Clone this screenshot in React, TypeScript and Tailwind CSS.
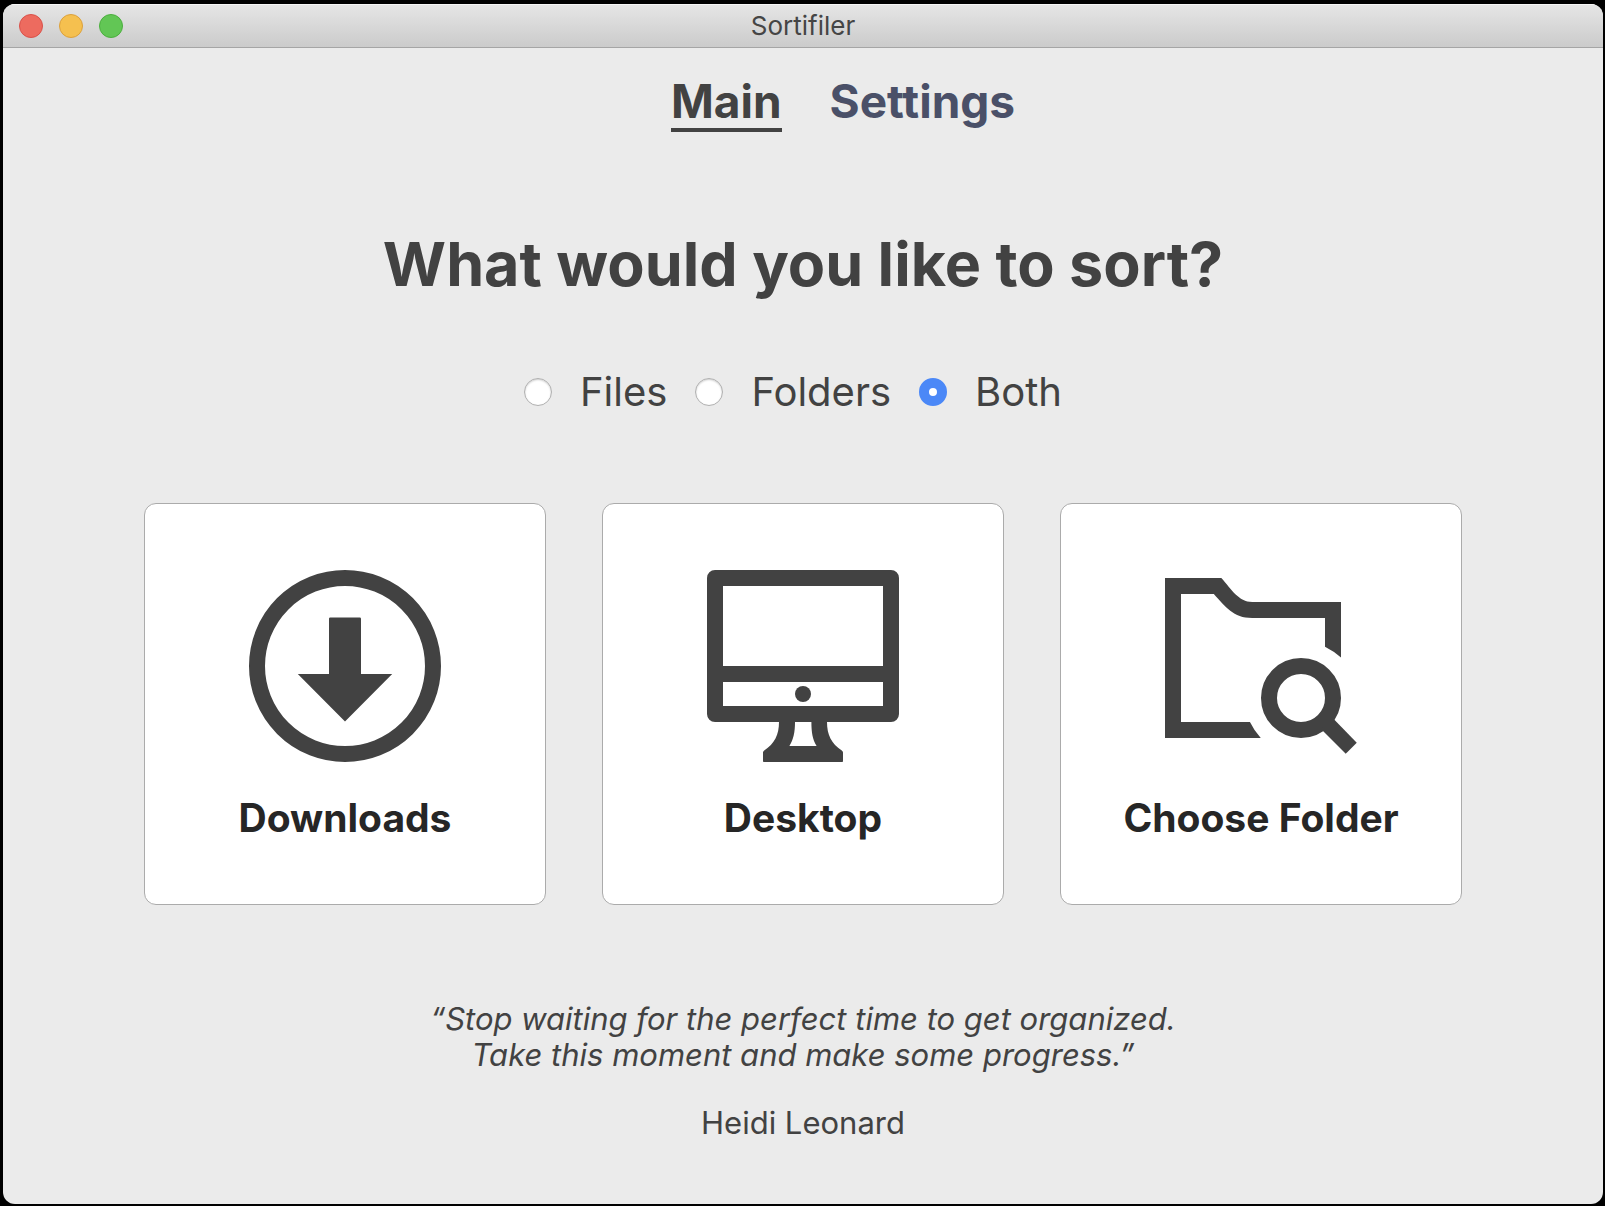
import { useState, type ReactNode } from "react";

const sortModes = ["Files", "Folders", "Both"];

function DownloadIcon() {
  return (
    <svg viewBox="0 0 24 24" className="size-48" fill="currentColor" aria-hidden="true">
      <circle cx="12" cy="12" r="11" fill="none" stroke="currentColor" strokeWidth="2" />
      <path d="M10.15 5.95h3.7q.15 0 .15.15V13h3.9L12 18.93 6.1 13H10V6.1q0-.15.15-.15Z" />
    </svg>
  );
}

function DesktopIcon() {
  return (
    <svg viewBox="0 0 24 24" className="size-48" fill="currentColor" aria-hidden="true">
      <path
        fillRule="evenodd"
        d="M1 0h22a1 1 0 0 1 1 1v17a1 1 0 0 1-1 1h-8c0 1.6.55 2.7 1.85 3.55q.15.1.15.25v1.1q0 .1-.1.1H7.1q-.1 0-.1-.1v-1.1q0-.15.15-.25C8.45 21.7 9 20.6 9 19H1a1 1 0 0 1-1-1V1a1 1 0 0 1 1-1ZM2 2v10h20V2ZM2 14v3h20v-3ZM11 19c0 1.3-.2 2.2-.7 3h3.4c-.5-.8-.65-1.7-.65-3Z"
      />
      <circle cx="12" cy="15.5" r="1" />
    </svg>
  );
}

function ChooseFolderIcon() {
  return (
    <svg viewBox="0 0 24 24" className="size-48" fill="currentColor" aria-hidden="true">
      <path d="M0 1h7.04C8.3 2.4 9.2 4 10.9 4H22v6.95q-.9-.8-2-1.35V6h-9.1C8.5 6 7.6 4.6 6.1 3H2v16h8.62q.5 1.05 1.35 2H0Z" />
      <circle cx="17" cy="16" r="4" fill="none" stroke="currentColor" strokeWidth="2" />
      <path d="M20.9 18.45l3.07 3.13-1.38 1.38-3.09-3.08Z" />
    </svg>
  );
}

function SortCard({ label, children }: { label: string; children: ReactNode }) {
  return (
    <button
      type="button"
      className="flex aspect-square flex-col items-center rounded-xl border border-[#ababab] bg-white pt-[66px] text-[#424242]"
    >
      {children}
      <span className="mt-8 text-[39px] leading-12 font-bold text-[#262626]">{label}</span>
    </button>
  );
}

export default function App() {
  const [mode, setMode] = useState("Both");

  return (
    <div className="flex min-h-screen bg-black pt-1 pr-0.5 pb-0.5 pl-[3px] font-['Inter',sans-serif] text-[#424242]">
      <div className="flex grow flex-col overflow-hidden rounded-xl bg-[#ebebeb]">
        <header className="grid h-11 grid-cols-[1fr_auto_1fr] items-center border-b border-[#a5a5a5] bg-linear-to-b from-[#e6e6e6] to-[#cbcbcb] px-4 shadow-[inset_0_1px_0_#f6f6f6]">
          <div className="flex gap-4">
            <button type="button" aria-label="Close" className="size-6 rounded-full border border-[#d8514a] bg-[#ed6b5f]" />
            <button type="button" aria-label="Minimize" className="size-6 rounded-full border border-[#dba03c] bg-[#f5c04f]" />
            <button type="button" aria-label="Zoom" className="size-6 rounded-full border border-[#4bae3e] bg-[#62c655]" />
          </div>
          <span className="text-[26px] leading-8 text-[#454545]">Sortifiler</span>
        </header>

        <main className="flex flex-col items-center">
          <nav className="mt-[26px] flex gap-12 pl-20 text-[46px] leading-[54px] font-bold">
            <a href="#main" aria-current="page" className="border-b-4 border-[#424242]">
              Main
            </a>
            <a href="#settings" className="text-[#4a5068]">
              Settings
            </a>
          </nav>

          <h1 className="mt-[92px] text-[61px] leading-20 font-bold">What would you like to sort?</h1>

          <div role="radiogroup" aria-label="What to sort" className="mt-[60px] mr-5 flex gap-7">
            {sortModes.map((name) => (
              <label key={name} className="flex items-center gap-7 text-[40px] leading-14">
                <input
                  type="radio"
                  name="mode"
                  checked={mode === name}
                  onChange={() => setMode(name)}
                  className="size-7 appearance-none rounded-full border border-[#b0b0b0] bg-white shadow-[inset_0_1px_2px_#cccccc] checked:border-[10px] checked:border-[#4b88f7] checked:shadow-none"
                />
                {name}
              </label>
            ))}
          </div>

          <section className="mt-[83px] grid w-full grid-cols-3 gap-14 px-[141px]">
            <SortCard label="Downloads">
              <DownloadIcon />
            </SortCard>
            <SortCard label="Desktop">
              <DesktopIcon />
            </SortCard>
            <SortCard label="Choose Folder">
              <ChooseFolderIcon />
            </SortCard>
          </section>

          <blockquote className="mt-24 text-center text-[31px] leading-9 italic">
            “Stop waiting for the perfect time to get organized.
            <br />
            Take this moment and make some progress.”
          </blockquote>
          <p className="mt-8 text-[31px] leading-9">Heidi Leonard</p>
        </main>
      </div>
    </div>
  );
}
